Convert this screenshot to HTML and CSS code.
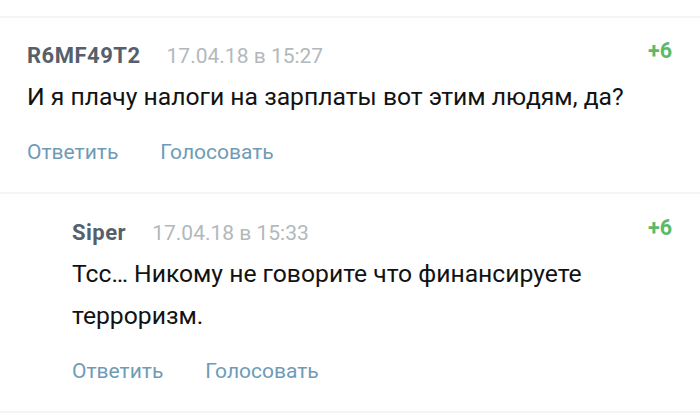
FILE: index.html
```html
<!DOCTYPE html>
<html lang="ru">
<head>
<meta charset="utf-8">
<link rel="stylesheet" href="styles.css">
</head>
<body>
<div class="thread">
  <div class="sep"></div>
  <div class="comment">
    <div class="head">
      <span class="name">R6MF49T2</span>
      <span class="date">17.04.18 в 15:27</span>
      <span class="score">+6</span>
    </div>
    <div class="text">И я плачу налоги на зарплаты вот этим людям, да?</div>
    <div class="actions"><span>Ответить</span><span>Голосовать</span></div>
  </div>
  <div class="sep"></div>
  <div class="comment reply">
    <div class="head">
      <span class="name">Siper</span>
      <span class="date">17.04.18 в 15:33</span>
      <span class="score">+6</span>
    </div>
    <div class="text">Тсс… Никому не говорите что финансируете терроризм.</div>
    <div class="actions"><span>Ответить</span><span>Голосовать</span></div>
  </div>
  <div class="sep"></div>
</div>
</body>
</html>
```

FILE: styles.css
```css
html, body {
  margin: 0;
  padding: 0;
  background: #ffffff;
  font-family: Roboto, "Noto Sans", sans-serif;
}
.thread {
  padding-top: 16px;
  display: flex;
  flex-direction: column;
}
.sep {
  height: 2px;
  background: #f5f5f5;
}
.comment {
  display: flex;
  flex-direction: column;
  padding: 26px 28px 28px 27px;
}
.comment.reply {
  padding-left: 72px;
  padding-top: 27px;
  padding-right: 28px;
}
.head {
  display: flex;
  align-items: flex-start;
  font-size: 21px;
  line-height: 24px;
  height: 24px;
}
.name {
  font-weight: 700;
  font-size: 22px;
  letter-spacing: 0.5px;
  color: #56606b;
}
.date {
  color: #b3b8bc;
  margin-left: 26px;
}
.score {
  margin-left: auto;
  margin-top: -5px;
  font-weight: 700;
  font-size: 21.5px;
  color: #5cb96a;
}
.text {
  margin-top: 8px;
  font-size: 24.7px;
  line-height: 42px;
  color: #121212;
  padding-right: 40px;
}
.actions {
  display: flex;
  gap: 42px;
  margin-top: 22px;
  font-size: 21px;
  line-height: 24px;
  color: #6f9bb6;
}
```
